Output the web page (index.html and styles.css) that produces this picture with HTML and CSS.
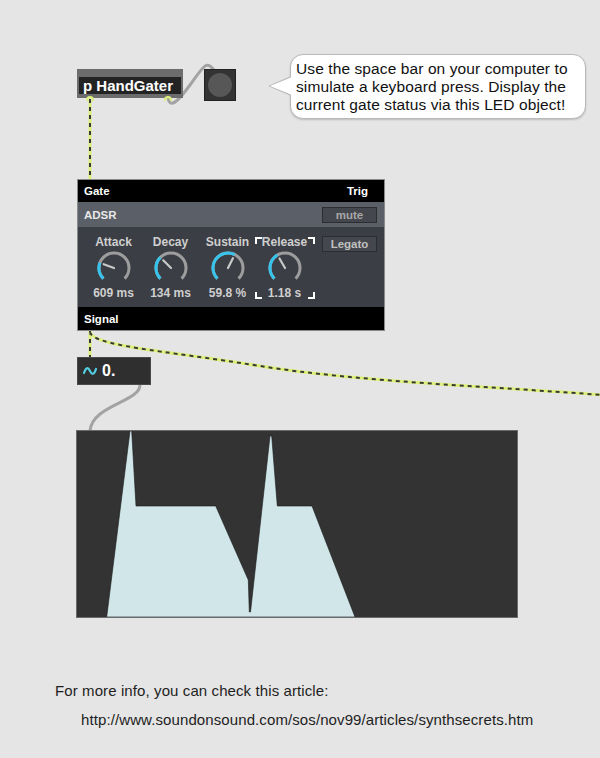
FILE: index.html
```html
<!DOCTYPE html>
<html>
<head>
<meta charset="utf-8">
<link rel="stylesheet" href="styles.css">
</head>
<body>
<div class="patcher">
  <svg class="cables" width="600" height="758" viewBox="0 0 600 758">
    <g class="gray-cable">
      <path d="M 168 98 C 170 108, 176 104, 190 85 S 206 60, 214 70"/>
      <path d="M 140 385 C 140 402, 92 405, 90 431"/>
    </g>
    <g class="sig-cable">
      <path class="base" d="M 90 99 L 90 179"/>
      <path class="dash" d="M 90 99 L 90 179"/>
      <path class="base" d="M 90 331 L 90 357"/>
      <path class="dash" d="M 90 331 L 90 357"/>
      <path class="base" d="M 90 332 C 93 346, 160 350, 260 366 S 500 387, 602 395"/>
      <path class="dash" d="M 90 332 C 93 346, 160 350, 260 366 S 500 387, 602 395"/>
    </g>
  </svg>

  <div class="obj handgater">
    <div class="obj-inner">p HandGater</div>
    <span class="inlet in-left"></span>
    <span class="inlet in-right"></span>
  </div>

  <div class="obj led"><span class="led-dot"></span></div>

  <div class="obj bubble">
    <p>Use the space bar on your computer to simulate a keyboard press. Display the current gate status via this LED object!</p>
  </div>

  <div class="obj adsr">
    <div class="bar">
      <span>Gate</span><span>Trig</span>
    </div>
    <div class="adsr-row">
      <span>ADSR</span><span class="btn">mute</span>
    </div>
    <div class="adsr-body">
      <div class="knob">
        <span class="klabel">Attack</span>
        <svg width="36" height="36" viewBox="0 0 36 36">
          <path class="track" d="M 7.39 28.61 A 15 15 0 1 1 28.61 28.61"/>
          <path class="val" d="M 7.39 28.61 A 15 15 0 0 1 3.9 12.87"/>
          <line class="needle" x1="18" y1="18" x2="7.66" y2="14.24"/>
        </svg>
        <span class="kval">609 ms</span>
      </div>
      <div class="knob">
        <span class="klabel">Decay</span>
        <svg width="36" height="36" viewBox="0 0 36 36">
          <path class="track" d="M 7.39 28.61 A 15 15 0 1 1 28.61 28.61"/>
          <path class="val" d="M 7.39 28.61 A 15 15 0 0 1 7.39 7.39"/>
          <line class="needle" x1="18" y1="18" x2="10.22" y2="10.22"/>
        </svg>
        <span class="kval">134 ms</span>
      </div>
      <div class="knob">
        <span class="klabel">Sustain</span>
        <svg width="36" height="36" viewBox="0 0 36 36">
          <path class="track" d="M 7.39 28.61 A 15 15 0 1 1 28.61 28.61"/>
          <path class="val" d="M 7.39 28.61 A 15 15 0 0 1 24.69 4.57"/>
          <line class="needle" x1="18" y1="18" x2="22.9" y2="8.15"/>
        </svg>
        <span class="kval">59.8 %</span>
      </div>
      <div class="knob release">
        <span class="klabel">Release</span>
        <svg width="36" height="36" viewBox="0 0 36 36">
          <path class="track" d="M 7.39 28.61 A 15 15 0 1 1 28.61 28.61"/>
          <path class="val" d="M 7.39 28.61 A 15 15 0 0 1 10.5 5.01"/>
          <line class="needle" x1="18" y1="18" x2="12.5" y2="8.47"/>
        </svg>
        <span class="kval">1.18 s</span>
        <svg class="brackets" width="60" height="62" viewBox="0 0 60 62">
          <path d="M 1 7 V 1 H 7 M 53 1 H 59 V 7 M 1 55 V 61 H 7 M 53 61 H 59 V 55"/>
        </svg>
      </div>
      <span class="btn legato">Legato</span>
    </div>
    <div class="bar signal">
      <span>Signal</span>
    </div>
  </div>

  <div class="obj numbox">
    <svg class="tilde" width="14" height="10" viewBox="0 0 14 10">
      <path d="M 1 7 C 3 1, 5 1, 7 5 S 11 9, 13 3"/>
    </svg>
    <span>0.</span>
  </div>

  <div class="obj scope">
    <svg width="440" height="186" viewBox="0 0 440 186">
      <polygon points="29.7,186 53,0 54.7,0 59,75 138.7,75 171.3,149 172.3,181 173.5,181 193,5 194.7,5 200.3,75 235,75 278,186"/>
    </svg>
  </div>

  <div class="obj info">
    <p>For more info, you can check this article:</p>
    <p class="url">http://www.soundonsound.com/sos/nov99/articles/synthsecrets.htm</p>
  </div>
</div>
</body>
</html>
```

FILE: styles.css
```css
html, body {
  margin: 0;
  padding: 0;
  background: #e5e5e5;
}

.patcher {
  position: relative;
  width: 600px;
  height: 758px;
  overflow: hidden;
  background: #e5e5e5;
  font-family: "Liberation Sans", Arial, sans-serif;
}

.cables {
  position: absolute;
  left: 0;
  top: 0;
  z-index: 0;
}

.gray-cable path {
  fill: none;
  stroke: #a3a3a3;
  stroke-width: 3;
  stroke-linecap: round;
}

.sig-cable path {
  fill: none;
}

.sig-cable .base {
  stroke: #dcf07c;
  stroke-width: 3;
}

.sig-cable .dash {
  stroke: #3a3a32;
  stroke-width: 2;
  stroke-dasharray: 4 4;
}

.obj {
  position: absolute;
  z-index: 1;
  box-sizing: border-box;
}

/* p HandGater */
.handgater {
  left: 77px;
  top: 69px;
  width: 106px;
  height: 29px;
  background: #6c6c6c;
  padding: 8px 2px 4px 2px;
}

.obj-inner {
  height: 100%;
  background: #232323;
  color: #fff;
  font-size: 15px;
  font-weight: bold;
  line-height: 17px;
  padding-left: 4px;
  white-space: nowrap;
}

.inlet {
  position: absolute;
  bottom: -3px;
  width: 8px;
  height: 5px;
  border: 2px solid #dcf07c;
  border-bottom: none;
  border-radius: 6px 6px 0 0;
  box-sizing: border-box;
}

.in-left { left: 9px; }
.in-right { left: 87px; }

/* LED */
.led {
  left: 204px;
  top: 69px;
  width: 32px;
  height: 32px;
  background: #333;
  border: 1px solid #222;
  display: flex;
  align-items: center;
  justify-content: center;
}

.led-dot {
  width: 24px;
  height: 24px;
  border-radius: 50%;
  background: #575757;
}

/* comment bubble */
.bubble {
  left: 290px;
  top: 54px;
  width: 296px;
  height: 65px;
  background: #fff;
  border: 1px solid #b9b9b9;
  border-radius: 13px;
  box-shadow: 0 1px 2px rgba(0, 0, 0, 0.18);
  padding: 5px 2px 0 5px;
}

.bubble::before {
  content: "";
  position: absolute;
  left: -23px;
  top: 21px;
  border-style: solid;
  border-width: 10px 23px 10px 0;
  border-color: transparent #b9b9b9 transparent transparent;
}

.bubble::after {
  content: "";
  position: absolute;
  left: -21px;
  top: 22px;
  border-style: solid;
  border-width: 9px 22px 9px 0;
  border-color: transparent #fff transparent transparent;
}

.bubble p {
  margin: 0;
  font-size: 15.5px;
  line-height: 18px;
  letter-spacing: 0.1px;
  color: #111;
}

/* ADSR panel */
.adsr {
  left: 77px;
  top: 179px;
  width: 308px;
  height: 152px;
  border: 1px solid #8a8a8a;
  display: flex;
  flex-direction: column;
  background: #3b3e44;
}

.bar {
  height: 22px;
  flex: none;
  background: #000;
  color: #fff;
  font-size: 11.5px;
  font-weight: bold;
  display: flex;
  align-items: center;
  justify-content: space-between;
  padding: 0 16px 0 6px;
}

.bar.signal {
  height: 23px;
  margin-top: auto;
}

.adsr-row {
  height: 25px;
  flex: none;
  background: #5b5f67;
  color: #e8e8e8;
  font-size: 11.5px;
  font-weight: bold;
  display: flex;
  align-items: center;
  justify-content: space-between;
  padding: 0 7px 0 6px;
}

.btn {
  width: 55px;
  height: 16px;
  box-sizing: border-box;
  background: #44474d;
  border: 1px solid #2b2d31;
  color: #a8a8a8;
  font-size: 11.5px;
  font-weight: bold;
  display: flex;
  align-items: center;
  justify-content: center;
}

.adsr-body {
  flex: none;
  height: 80px;
  display: flex;
  align-items: flex-start;
  padding: 8px 0 0 7px;
  box-sizing: border-box;
}

.knob {
  width: 57px;
  display: flex;
  flex-direction: column;
  align-items: center;
  position: relative;
  flex: none;
}

.klabel, .kval {
  font-size: 12px;
  font-weight: bold;
  line-height: 14px;
  color: #cfcfcf;
  white-space: nowrap;
}

.knob svg {
  margin: 1px 0 0 0;
}

.track {
  fill: none;
  stroke: #9d9d9d;
  stroke-width: 3;
}

.val {
  fill: none;
  stroke: #36c3ec;
  stroke-width: 3;
}

.needle {
  stroke: #c8c8c8;
  stroke-width: 2.2;
  stroke-linecap: round;
}

.knob .brackets {
  position: absolute;
  left: -1px;
  top: 2px;
  margin: 0;
}

.brackets path {
  fill: none;
  stroke: #fff;
  stroke-width: 2;
}

.legato {
  margin-left: 9px;
  margin-top: 1px;
  color: #c0c0c0;
}

/* number box */
.numbox {
  left: 77px;
  top: 357px;
  width: 74px;
  height: 28px;
  background: #2f2f2f;
  border: 1px solid #4a4a4a;
  display: flex;
  align-items: center;
  padding-left: 5px;
  gap: 5px;
  color: #fff;
  font-size: 16px;
  font-weight: bold;
}

.tilde path {
  fill: none;
  stroke: #52cfe3;
  stroke-width: 2.2;
  stroke-linecap: round;
}

/* scope */
.scope {
  left: 77px;
  top: 431px;
  width: 440px;
  height: 186px;
  background: #333;
  outline: 1px solid #6a6a6a;
}

.scope svg {
  display: block;
}

.scope polygon {
  fill: #d0e6e9;
  stroke: #1a1a1a;
  stroke-width: 0.6;
}

/* info */
.info {
  left: 55px;
  top: 682px;
  color: #1e1e1e;
}

.info p {
  margin: 0;
  font-size: 15px;
  line-height: 17px;
  letter-spacing: 0.1px;
  white-space: nowrap;
}

.info .url {
  margin: 12px 0 0 26px;
}
```
